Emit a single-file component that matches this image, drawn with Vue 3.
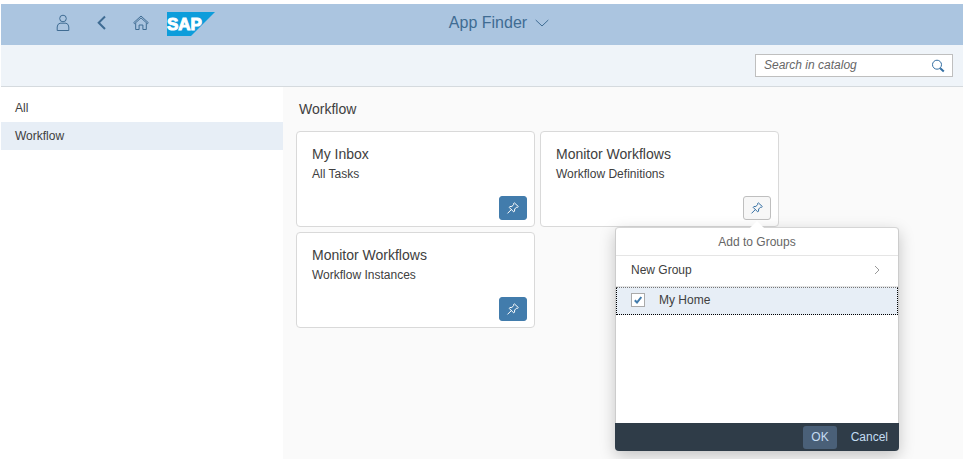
<script setup>
import { ref } from 'vue'

const categories = ['All', 'Workflow']
const selected = ref('Workflow')
const query = ref('')
const inHome = ref(true)
const open = ref('definitions')

const apps = [
  { id: 'inbox', title: 'My Inbox', subtitle: 'All Tasks' },
  { id: 'definitions', title: 'Monitor Workflows', subtitle: 'Workflow Definitions' },
  { id: 'instances', title: 'Monitor Workflows', subtitle: 'Workflow Instances' },
]

function toggle(id) {
  open.value = open.value === id ? '' : id
}
</script>

<template>
  <div class="page">
    <header class="shell">
      <nav class="shell-nav" aria-label="Shell">
        <button type="button" class="shell-btn" aria-label="User">
          <svg width="14" height="18" viewBox="0 0 14 18">
            <circle cx="7" cy="4.500" r="3.300" />
            <path d="M1.200 16.500v-3.500q0-3 2.800-3.800h6q2.800.8 2.800 3.800v3.500z" />
          </svg>
        </button>
        <button type="button" class="shell-btn" aria-label="Back">
          <svg class="bold" width="14" height="18" viewBox="0 0 14 18">
            <path d="M10 2.500 3.700 8.700 10 15" />
          </svg>
        </button>
        <button type="button" class="shell-btn" aria-label="Home">
          <svg width="16" height="18" viewBox="0 0 16 18">
            <path d="M.7 8.700 8 2l7.300 6.700-.9 1L8 3.900 1.600 9.700z" />
            <path d="M2.700 9.200v6.300h3.400v-4.500h3.800v4.500h3.400V9.200" />
          </svg>
        </button>
        <a class="logo" href="#" aria-label="SAP">
          <svg width="48" height="24" viewBox="0 0 48 24">
            <path d="M0 0h48L24 24H0z" fill="#0d9ddb" />
            <text x="0" y="18" class="logo-text">SAP</text>
          </svg>
        </a>
      </nav>
      <button type="button" class="shell-title">
        App Finder
        <svg width="14" height="8" viewBox="0 0 14 8"><path d="m.7 1 6.300 6 6.300-6" /></svg>
      </button>
    </header>

    <form class="toolbar" role="search" @submit.prevent>
      <div class="search">
        <input v-model="query" type="text" placeholder="Search in catalog" aria-label="Search in catalog" />
        <button type="submit" aria-label="Search">
          <svg width="14" height="14" viewBox="0 0 14 14">
            <circle cx="6" cy="5.700" r="4.500" />
            <path class="handle" d="m9.200 9.200 3.600 3.400" />
          </svg>
        </button>
      </div>
    </form>

    <div class="body">
      <nav class="sidebar" aria-label="Catalogs">
        <button
          v-for="name in categories"
          :key="name"
          type="button"
          :class="{ active: name === selected }"
          @click="selected = name"
        >{{ name }}</button>
      </nav>

      <main class="content">
        <h1>Workflow</h1>
        <div class="tiles">
          <article v-for="app in apps" :key="app.id" class="tile">
            <h2>{{ app.title }}</h2>
            <p>{{ app.subtitle }}</p>
            <div class="anchor">
              <button
                type="button"
                class="pin"
                :class="{ pressed: open === app.id }"
                aria-label="Add to groups"
                @click="toggle(app.id)"
              >
                <svg width="14" height="14" viewBox="0 0 14 14">
                  <path d="M8.300 1.800 12.300 5.500 11.500 6.400 10.500 6.200 8.700 8 8.500 10.300 7.700 10.900 3.200 6.400 3.800 5.600 5.900 5.400 7.800 3.500 7.600 2.500z" />
                  <path d="M5.400 8.500 1.500 12.400" />
                </svg>
              </button>

              <section v-if="open === app.id" class="popover" role="dialog" aria-label="Add to Groups">
                <h3>Add to Groups</h3>
                <button type="button" class="row new-group">
                  New Group
                  <svg width="6" height="10" viewBox="0 0 6 10"><path d="m1 1 4 4-4 4" /></svg>
                </button>
                <label class="row choice">
                  <input v-model="inHome" type="checkbox" />
                  <span class="box">
                    <svg v-if="inHome" width="8" height="8" viewBox="0 0 8 8"><path d="m.8 4.200 2.200 2.300L7.300 1" /></svg>
                  </span>
                  My Home
                </label>
                <footer>
                  <button type="button" class="ok">OK</button>
                  <button type="button">Cancel</button>
                </footer>
              </section>
            </div>
          </article>
        </div>
      </main>
    </div>
  </div>
</template>

<style>
body {
  background: #fff;
}
</style>

<style scoped>
.page {
  box-sizing: border-box;
  display: flex;
  flex-direction: column;
  min-height: 100vh;
  padding: 4px 0 0 1px;
  font-family: "Liberation Sans", Arial, sans-serif;
  font-size: 12px;
  line-height: 16px;
  color: #404040;
}

button {
  margin: 0;
  padding: 0;
  border: 0;
  background: none;
  font: inherit;
  color: inherit;
  cursor: pointer;
}

svg {
  display: block;
  fill: none;
  stroke: currentColor;
}

h1, h2, h3, p {
  margin: 0;
  font-weight: normal;
}

.shell {
  display: grid;
  grid-template-columns: 1fr auto 1fr;
  align-items: center;
  box-sizing: border-box;
  height: 41px;
  padding-bottom: 3px;
  background: #abc5e0;
  color: #3f6c93;
}

.shell-nav {
  display: flex;
  align-items: center;
  padding-left: 42px;
}

.shell-btn {
  display: flex;
  align-items: center;
  justify-content: center;
  width: 39px;
  height: 38px;
}

.shell-btn .bold {
  stroke-width: 2;
}

.logo {
  margin-left: 7px;
  padding-top: 2px;
}

.logo svg {
  stroke: none;
}

.logo-text {
  fill: #fff;
  stroke: #fff;
  stroke-width: 1px;
  font-size: 17px;
  font-weight: bold;
}

.shell-title {
  display: flex;
  align-items: center;
  gap: 8px;
  padding-left: 34px;
  font-size: 16px;
  line-height: 20px;
}

.toolbar {
  display: flex;
  justify-content: flex-end;
  align-items: center;
  height: 41px;
  padding-right: 10px;
  border-bottom: 1px solid #d5dade;
  background: #eff4f9;
}

.search {
  display: flex;
  box-sizing: border-box;
  width: 198px;
  height: 23px;
  border: 1px solid #bfbfbf;
  background: #fff;
}

.search input {
  flex: 1;
  min-width: 0;
  padding: 0 0 2px 8px;
  border: 0;
  outline: 0;
  background: none;
  font: inherit;
  color: #404040;
}

.search input::placeholder {
  font-style: italic;
  color: #666;
  opacity: 1;
}

.search button {
  display: flex;
  align-items: center;
  justify-content: center;
  width: 28px;
  color: #346fa3;
}

.handle {
  stroke-width: 2;
}

.body {
  display: flex;
  flex: 1;
}

.sidebar {
  display: flex;
  flex-direction: column;
  flex: 0 0 282px;
  padding-top: 7px;
  background: #fff;
}

.sidebar button {
  height: 28px;
  padding: 0 14px;
  text-align: left;
}

.sidebar .active {
  background: #e7eef6;
}

.content {
  flex: 1;
  padding: 12px 13px;
  background: #fafafa;
}

h1 {
  padding-left: 3px;
  font-size: 14px;
  line-height: 20px;
}

.tiles {
  display: flex;
  flex-wrap: wrap;
  gap: 5px;
  max-width: 500px;
  margin-top: 12px;
}

.tile {
  display: flex;
  flex-direction: column;
  box-sizing: border-box;
  flex: 0 0 239px;
  height: 96px;
  padding: 12px 7px 6px 15px;
  border: 1px solid #d9d9d9;
  border-radius: 4px;
  background: #fff;
}

h2 {
  font-size: 14px;
  line-height: 20px;
}

.tile p {
  line-height: 20px;
}

.anchor {
  position: relative;
  align-self: flex-end;
  margin-top: auto;
}

.pin {
  display: flex;
  align-items: center;
  justify-content: center;
  width: 28px;
  height: 24px;
  border: 1px solid #427cac;
  border-radius: 3px;
  background: #427cac;
  color: #fff;
}

.pin.pressed {
  border-color: #bfbfbf;
  background: #f7f7f7;
  color: #346fa3;
}

.popover {
  position: absolute;
  top: 31px;
  left: 50%;
  z-index: 1;
  display: flex;
  flex-direction: column;
  width: 282px;
  height: 223px;
  margin-left: -142px;
  border: 1px solid #ccc;
  border-top-color: #d5d5d5;
  border-bottom: 0;
  border-radius: 4px;
  background: #fff;
  box-shadow: 0 5px 16px rgba(0, 0, 0, 0.22);
}

.popover::before {
  content: "";
  position: absolute;
  top: -5px;
  left: 136px;
  width: 10px;
  height: 10px;
  background: #fff;
  transform: rotate(45deg);
}

h3 {
  position: relative;
  padding: 6px 0 5px;
  border-bottom: 1px solid #e5e5e5;
  font-size: 12px;
  line-height: 16px;
  text-align: center;
  color: #666;
}

.row {
  display: flex;
  align-items: center;
  box-sizing: border-box;
  padding: 0 15px;
}

.new-group {
  justify-content: space-between;
  height: 31px;
  padding-right: 18px;
  padding-bottom: 2px;
  border-bottom: 1px solid #e5e5e5;
}

.new-group svg {
  stroke: #999;
}

.choice {
  position: relative;
  height: 28px;
  padding: 0 14px 2px;
  border: 1px dotted #000;
  border-top-color: #777;
  background: #e7eef6;
}

.choice input {
  position: absolute;
  width: 14px;
  height: 14px;
  margin: 0;
  opacity: 0;
}

.box {
  display: flex;
  align-items: center;
  justify-content: center;
  box-sizing: border-box;
  width: 14px;
  height: 14px;
  margin-right: 14px;
  border: 1px solid #aaa;
  background: #fff;
}

.box svg {
  stroke: #427cac;
  stroke-width: 2;
}

footer {
  display: flex;
  justify-content: flex-end;
  align-items: center;
  gap: 4px;
  height: 28px;
  margin: auto -1px 0;
  padding-right: 1px;
  border-radius: 0 0 4px 4px;
  background: #2f3c48;
  color: #c5dcf2;
}

footer button {
  height: 23px;
  padding: 0 10px;
  border-radius: 3px;
}

footer .ok {
  padding: 0 8px;
  background: #4a6078;
}
</style>
